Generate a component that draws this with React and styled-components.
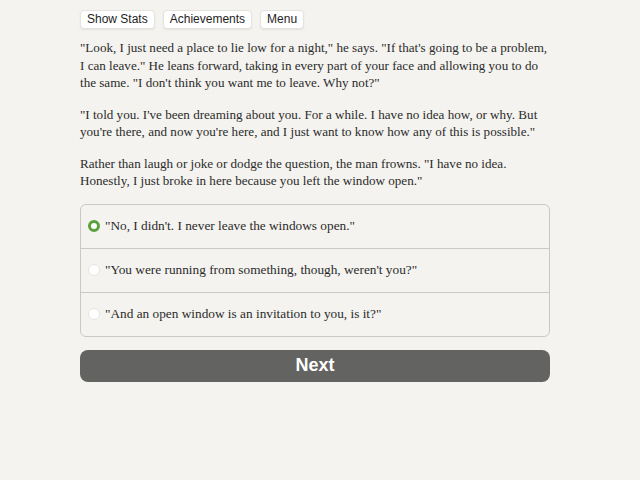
import { useState } from "react";
import styled, { createGlobalStyle } from "styled-components";

const GlobalStyle = createGlobalStyle`
  html, body {
    margin: 0;
    padding: 0;
    background: #f4f3ef;
  }
`;

const story = [
  `"Look, I just need a place to lie low for a night," he says. "If that's going to be a problem, I can leave." He leans forward, taking in every part of your face and allowing you to do the same. "I don't think you want me to leave. Why not?"`,
  `"I told you. I've been dreaming about you. For a while. I have no idea how, or why. But you're there, and now you're here, and I just want to know how any of this is possible."`,
  `Rather than laugh or joke or dodge the question, the man frowns. "I have no idea. Honestly, I just broke in here because you left the window open."`,
];

const options = [
  `"No, I didn't. I never leave the windows open."`,
  `"You were running from something, though, weren't you?"`,
  `"And an open window is an invitation to you, is it?"`,
];

function App() {
  const [picked, setPicked] = useState(0);

  return (
    <>
      <GlobalStyle />
      <Page>
        <Toolbar>
          <ToolButton>Show Stats</ToolButton>
          <ToolButton>Achievements</ToolButton>
          <ToolButton>Menu</ToolButton>
        </Toolbar>
        {story.map((text, i) => (
          <Paragraph key={i}>{text}</Paragraph>
        ))}
        <ChoiceList>
          {options.map((text, i) => (
            <Choice key={i} onClick={() => setPicked(i)}>
              <Radio checked={picked === i} />
              {text}
            </Choice>
          ))}
        </ChoiceList>
        <NextButton>Next</NextButton>
      </Page>
    </>
  );
}

const Page = styled.div`
  width: 470px;
  margin: 0 0 0 80px;
  padding-top: 10px;
  font-family: "Liberation Serif", "Times New Roman", serif;
  color: #2b2b2b;
`;

const Toolbar = styled.div`
  display: flex;
  gap: 8px;
  margin-bottom: 10px;
`;

const ToolButton = styled.button`
  font-family: "Liberation Sans", Arial, sans-serif;
  font-size: 12px;
  color: #1e1e1e;
  background: #fff;
  border: 1px solid #e4e3de;
  border-radius: 4px;
  padding: 2px 6px;
  height: 19px;
  line-height: 13px;
  box-shadow: 0 1px 2px rgba(0, 0, 0, 0.07);
`;

const Paragraph = styled.p`
  margin: 0 0 14px 0;
  font-size: 13.1px;
  line-height: 17.5px;
`;

const ChoiceList = styled.div`
  margin-top: 3px;
  border: 1px solid #c9c8c4;
  border-radius: 6px;
  overflow: hidden;
`;

const Choice = styled.label`
  display: flex;
  align-items: center;
  gap: 5px;
  height: 43px;
  padding: 0 7px;
  font-size: 13.3px;
  border-top: 1px solid #c9c8c4;
  &:first-child {
    border-top: none;
  }
`;

const Radio = styled.span`
  flex: none;
  box-sizing: border-box;
  width: 12px;
  height: 12px;
  border-radius: 50%;
  background: #fff;
  border: ${(p) => (p.checked ? "3.5px solid #5aa03c" : "1px solid #e6e5e1")};
`;

const NextButton = styled.button`
  display: block;
  width: 100%;
  height: 32px;
  margin-top: 13px;
  border: none;
  border-radius: 8px;
  background: #636361;
  color: #fff;
  font-family: "Liberation Sans", Arial, sans-serif;
  font-weight: bold;
  font-size: 18px;
`;

export default App;
